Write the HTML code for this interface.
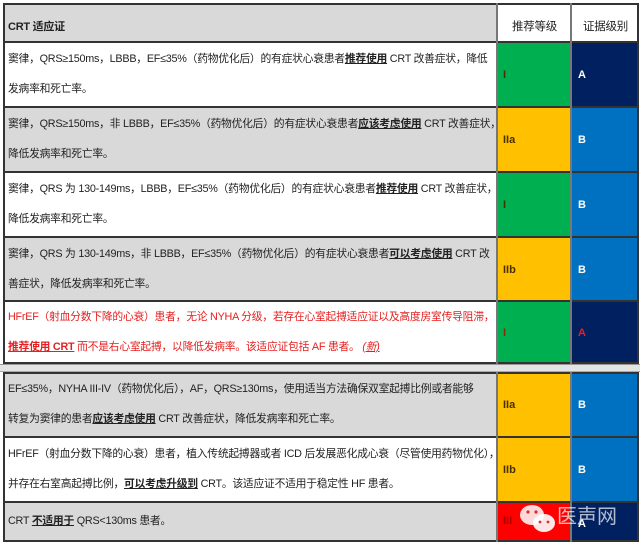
<!DOCTYPE html>
<html><head><meta charset="utf-8"><style>
body{margin:0;width:640px;height:545px;background:#fff;position:relative;overflow:hidden;font-family:"Liberation Sans","Noto Sans CJK SC",sans-serif;}
.c{position:absolute;box-sizing:border-box;}
.t{position:absolute;left:8px;white-space:nowrap;font-size:10.8px;color:#222;line-height:14px;letter-spacing:-0.25px}
.g{background:#d9d9d9}
.w{background:#fff}
.lv{position:absolute;left:6px;font-weight:bold;font-size:11px;color:#4a3000}
.ev{position:absolute;left:7px;font-weight:bold;font-size:11px;color:#fff}
.hl{position:absolute;height:2px;background:#333;left:3px;width:635px}
.vl{position:absolute;width:2px;background:#333}
</style></head><body>
<div class="c g" style="left:3px;top:3px;width:494px;height:39px"></div>
<div class="c w" style="left:497px;top:3px;width:141px;height:39px"></div>
<div class="c w" style="left:3px;top:42px;width:494px;height:65px"></div>
<div class="c g" style="left:3px;top:107px;width:494px;height:65px"></div>
<div class="c w" style="left:3px;top:172px;width:494px;height:65px"></div>
<div class="c g" style="left:3px;top:237px;width:494px;height:64px"></div>
<div class="c w" style="left:3px;top:301px;width:494px;height:63px"></div>
<div class="c" style="left:0;top:364px;width:640px;height:8px;background:#e4e4e4;border-top:1px solid #999;border-bottom:1px solid #aaa"></div>
<div class="c g" style="left:3px;top:372px;width:494px;height:65px"></div>
<div class="c w" style="left:3px;top:437px;width:494px;height:65px"></div>
<div class="c g" style="left:3px;top:502px;width:494px;height:39px"></div>
<div class="c" style="left:497px;top:42px;width:74px;height:65px;background:#00b050"><span class="lv" style="top:27px">I</span></div>
<div class="c" style="left:497px;top:107px;width:74px;height:65px;background:#ffc000"><span class="lv" style="top:27px">IIa</span></div>
<div class="c" style="left:497px;top:172px;width:74px;height:65px;background:#00b050"><span class="lv" style="top:27px">I</span></div>
<div class="c" style="left:497px;top:237px;width:74px;height:64px;background:#ffc000"><span class="lv" style="top:27px">IIb</span></div>
<div class="c" style="left:497px;top:301px;width:74px;height:63px;background:#00b050"><span class="lv" style="top:26px;color:#8a2a00">I</span></div>
<div class="c" style="left:497px;top:372px;width:74px;height:65px;background:#ffc000"><span class="lv" style="top:27px">IIa</span></div>
<div class="c" style="left:497px;top:437px;width:74px;height:65px;background:#ffc000"><span class="lv" style="top:27px">IIb</span></div>
<div class="c" style="left:497px;top:502px;width:74px;height:39px;background:#ff0000"><span class="lv" style="top:13px;color:#a00">III</span></div>
<div class="c" style="left:571px;top:42px;width:67px;height:65px;background:#002060"><span class="ev" style="top:27px">A</span></div>
<div class="c" style="left:571px;top:107px;width:67px;height:65px;background:#0070c0"><span class="ev" style="top:27px">B</span></div>
<div class="c" style="left:571px;top:172px;width:67px;height:65px;background:#0070c0"><span class="ev" style="top:27px">B</span></div>
<div class="c" style="left:571px;top:237px;width:67px;height:64px;background:#0070c0"><span class="ev" style="top:27px">B</span></div>
<div class="c" style="left:571px;top:301px;width:67px;height:63px;background:#002060"><span class="ev" style="top:26px;color:#e0202a">A</span></div>
<div class="c" style="left:571px;top:372px;width:67px;height:65px;background:#0070c0"><span class="ev" style="top:27px">B</span></div>
<div class="c" style="left:571px;top:437px;width:67px;height:65px;background:#0070c0"><span class="ev" style="top:27px">B</span></div>
<div class="c" style="left:571px;top:502px;width:67px;height:39px;background:#002060"><span class="ev" style="top:16px">A</span></div>
<div class="hl" style="top:3px"></div><div class="hl" style="top:41px"></div>
<div class="hl" style="top:106px"></div><div class="hl" style="top:171px"></div>
<div class="hl" style="top:236px"></div><div class="hl" style="top:300px"></div>
<div class="hl" style="top:362px"></div><div class="hl" style="top:372px"></div>
<div class="hl" style="top:436px"></div><div class="hl" style="top:501px"></div>
<div class="hl" style="top:540px"></div>
<div class="vl" style="left:3px;top:3px;height:361px"></div><div class="vl" style="left:3px;top:372px;height:170px"></div>
<div class="vl" style="left:496px;top:3px;height:361px;background:#777"></div><div class="vl" style="left:496px;top:372px;height:170px;background:#777"></div>
<div class="vl" style="left:570px;top:3px;height:361px;background:#777"></div><div class="vl" style="left:570px;top:372px;height:170px;background:#777"></div>
<div class="vl" style="left:637px;top:3px;height:361px"></div><div class="vl" style="left:637px;top:372px;height:170px"></div>
<div class="t" style="top:20px;font-weight:bold;font-size:11px">CRT 适应证</div>
<div class="t" style="left:512px;top:20px;font-size:11.5px">推荐等级</div>
<div class="t" style="left:583px;top:20px;font-size:11.5px">证据级别</div>
<div class="t" style="top:52px">窦律，QRS≥150ms，LBBB，EF≤35%（药物优化后）的有症状心衰患者<u><b>推荐使用</b></u> CRT 改善症状，降低</div>
<div class="t" style="top:82px">发病率和死亡率。</div>
<div class="t" style="top:117px">窦律，QRS≥150ms，非 LBBB，EF≤35%（药物优化后）的有症状心衰患者<u><b>应该考虑使用</b></u> CRT 改善症状，</div>
<div class="t" style="top:147px">降低发病率和死亡率。</div>
<div class="t" style="top:182px">窦律，QRS 为 130-149ms，LBBB，EF≤35%（药物优化后）的有症状心衰患者<u><b>推荐使用</b></u> CRT 改善症状，</div>
<div class="t" style="top:212px">降低发病率和死亡率。</div>
<div class="t" style="top:247px">窦律，QRS 为 130-149ms，非 LBBB，EF≤35%（药物优化后）的有症状心衰患者<u><b>可以考虑使用</b></u> CRT 改</div>
<div class="t" style="top:277px">善症状，降低发病率和死亡率。</div>
<div class="t" style="top:310px;color:#e52020">HFrEF（射血分数下降的心衰）患者，无论 NYHA 分级，若存在心室起搏适应证以及高度房室传导阻滞，</div>
<div class="t" style="top:340px;color:#e52020"><u><b>推荐使用 CRT</b></u> 而不是右心室起搏，以降低发病率。该适应证包括 AF 患者。 <u><i>(新)</i></u></div>
<div class="t" style="top:382px">EF≤35%，NYHA III-IV（药物优化后），AF，QRS≥130ms，使用适当方法确保双室起搏比例或者能够</div>
<div class="t" style="top:412px">转复为窦律的患者<u><b>应该考虑使用</b></u> CRT 改善症状，降低发病率和死亡率。</div>
<div class="t" style="top:447px">HFrEF（射血分数下降的心衰）患者，植入传统起搏器或者 ICD 后发展恶化成心衰（尽管使用药物优化），</div>
<div class="t" style="top:477px">并存在右室高起搏比例，<u><b>可以考虑升级到</b></u> CRT。该适应证不适用于稳定性 HF 患者。</div>
<div class="t" style="top:514px">CRT <u><b>不适用于</b></u> QRS&lt;130ms 患者。</div>
<svg style="position:absolute;left:518px;top:502px" width="40" height="34" viewBox="0 0 40 34"><ellipse cx="14" cy="13" rx="12" ry="10" fill="#fff" opacity=".85"/><ellipse cx="26" cy="21" rx="11" ry="9" fill="#fff" opacity=".9"/><circle cx="10" cy="10" r="1.6" fill="#c33"/><circle cx="18" cy="10" r="1.6" fill="#c33"/><circle cx="22" cy="20" r="1.4" fill="#c33"/><circle cx="30" cy="20" r="1.4" fill="#c33"/></svg>
<div class="t" style="left:557px;top:505px;font-size:20px;color:rgba(255,255,255,.7);line-height:24px;letter-spacing:0">医声网</div>
</body></html>
